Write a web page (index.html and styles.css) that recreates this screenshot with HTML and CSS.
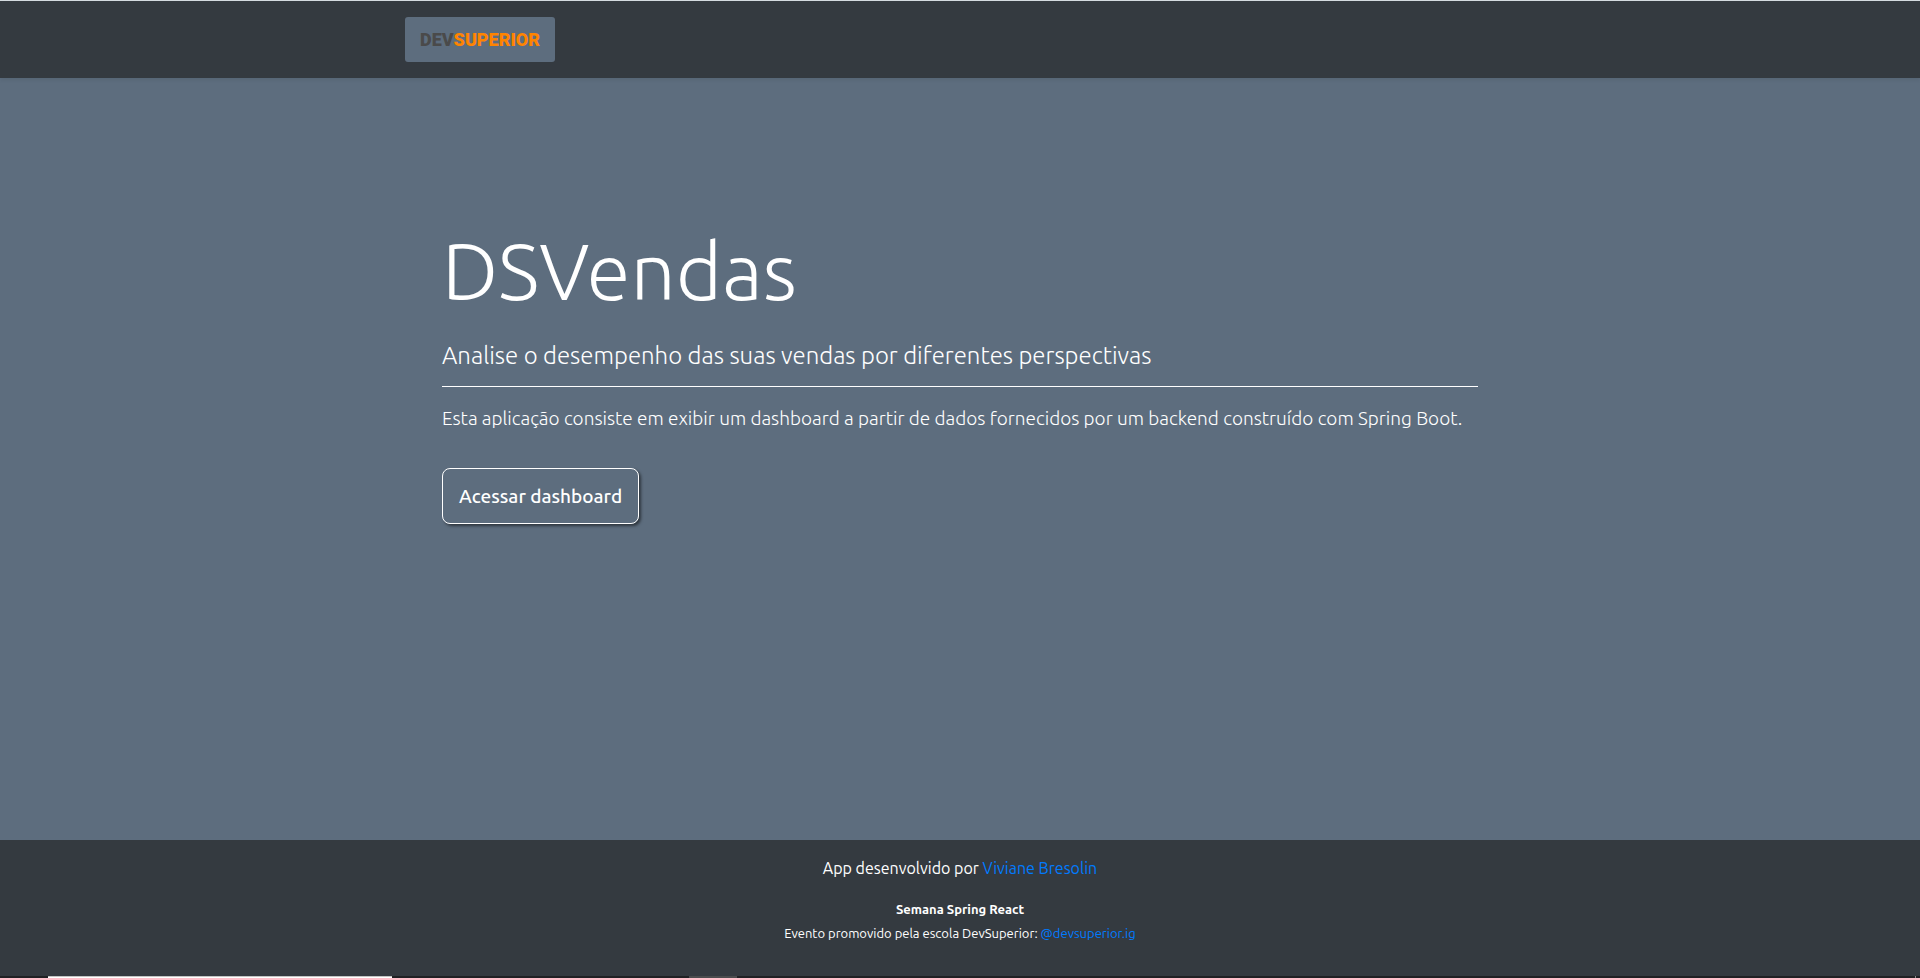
FILE: index.html
```html
<!DOCTYPE html>
<html lang="pt-BR">
<head>
  <meta charset="utf-8">
  <meta name="viewport" content="width=device-width, initial-scale=1">
  <title>DSVendas</title>
  <link rel="stylesheet" href="styles.css">
</head>
<body>
  <header class="navbar">
    <nav class="container">
      <a class="logo" href="#"><span class="logo-dev">DEV</span><span class="logo-superior">SUPERIOR</span></a>
    </nav>
  </header>
  <main class="main">
    <section class="hero">
      <h1 class="title">DSVendas</h1>
      <p class="lead">Analise o desempenho das suas vendas por diferentes perspectivas</p>
      <hr class="rule">
      <p class="text">Esta aplicação consiste em exibir um dashboard a partir de dados fornecidos por um backend construído com Spring Boot.</p>
      <button class="btn" type="button">Acessar dashboard</button>
    </section>
  </main>
  <footer class="footer">
    <p class="author">App desenvolvido por <a class="link" href="#">Viviane Bresolin</a></p>
    <p class="event"><strong>Semana Spring React</strong></p>
    <p class="event">Evento promovido pela escola DevSuperior: <a class="link" href="#">@devsuperior.ig</a></p>
  </footer>
  <div class="taskbar">
    <span class="task-search"></span>
    <span class="task-active"></span>
    <span class="task-edge"></span>
  </div>
</body>
</html>
```
FILE: styles.css
```css
* {
  box-sizing: border-box;
}

body {
  display: flex;
  flex-direction: column;
  min-height: 100vh;
  margin: 0;
  background: #5d6d7e;
  color: #fff;
  font: 400 16px/24px Ubuntu, "Open Sans", sans-serif;
}

.navbar {
  padding: 16px 0;
  border-top: 1px solid #d5dbe0;
  background: #343a40;
  box-shadow: 0 2px 4px rgba(0, 0, 0, 0.075);
}

.container {
  display: flex;
  width: 100%;
  max-width: 1140px;
  margin: 0 auto;
  padding: 0 15px;
}

.logo {
  display: flex;
  align-items: center;
  justify-content: center;
  width: 150px;
  height: 45px;
  border-radius: 3px;
  background: #5d6d7e;
  font: 900 18px/24px Roboto, sans-serif;
  text-decoration: none;
}

.logo-dev {
  color: #4a4a4a;
}

.logo-superior {
  color: #ff8400;
}

.main {
  display: flex;
  flex: 1;
  justify-content: center;
}

.hero {
  width: 100%;
  max-width: 1100px;
  padding: 144px 32px 64px;
}

.title {
  margin: 0 0 22px;
  font-size: 80px;
  font-weight: 300;
  line-height: 96px;
}

.lead {
  margin: 0;
  font-size: 24px;
  font-weight: 300;
  line-height: 32px;
}

.rule {
  margin: 14px 0 16px;
  border: 0;
  border-top: 1px solid #fff;
}

.text {
  margin: 0 0 35px;
  font-size: 19px;
  font-weight: 300;
  line-height: 30px;
}

.btn {
  padding: 12px 16px;
  border: 1px solid #fff;
  border-radius: 8px;
  background: transparent;
  box-shadow: 2px 2px 3px rgba(0, 0, 0, 0.5);
  color: #fff;
  font: 500 19px/30px Ubuntu, "Open Sans", sans-serif;
}

.footer {
  padding: 16px 16px 31px;
  background: #343a40;
  text-align: center;
}

.author {
  margin: 0 0 17px;
}

.event {
  margin: 0;
  font-size: 13px;
}

.link {
  color: #007bff;
  text-decoration: none;
}

.taskbar {
  display: flex;
  height: 2px;
  padding-left: 48px;
  background: #202124;
}

.task-search {
  width: 344px;
  border-top: 1px solid #c4c4c4;
  background: #fff;
}

.task-active {
  width: 48px;
  margin-left: 297px;
  background: #4b4c4e;
}

.task-edge {
  width: 1px;
  margin-right: 4px;
  margin-left: auto;
  background: #8a8a8a;
}
```
